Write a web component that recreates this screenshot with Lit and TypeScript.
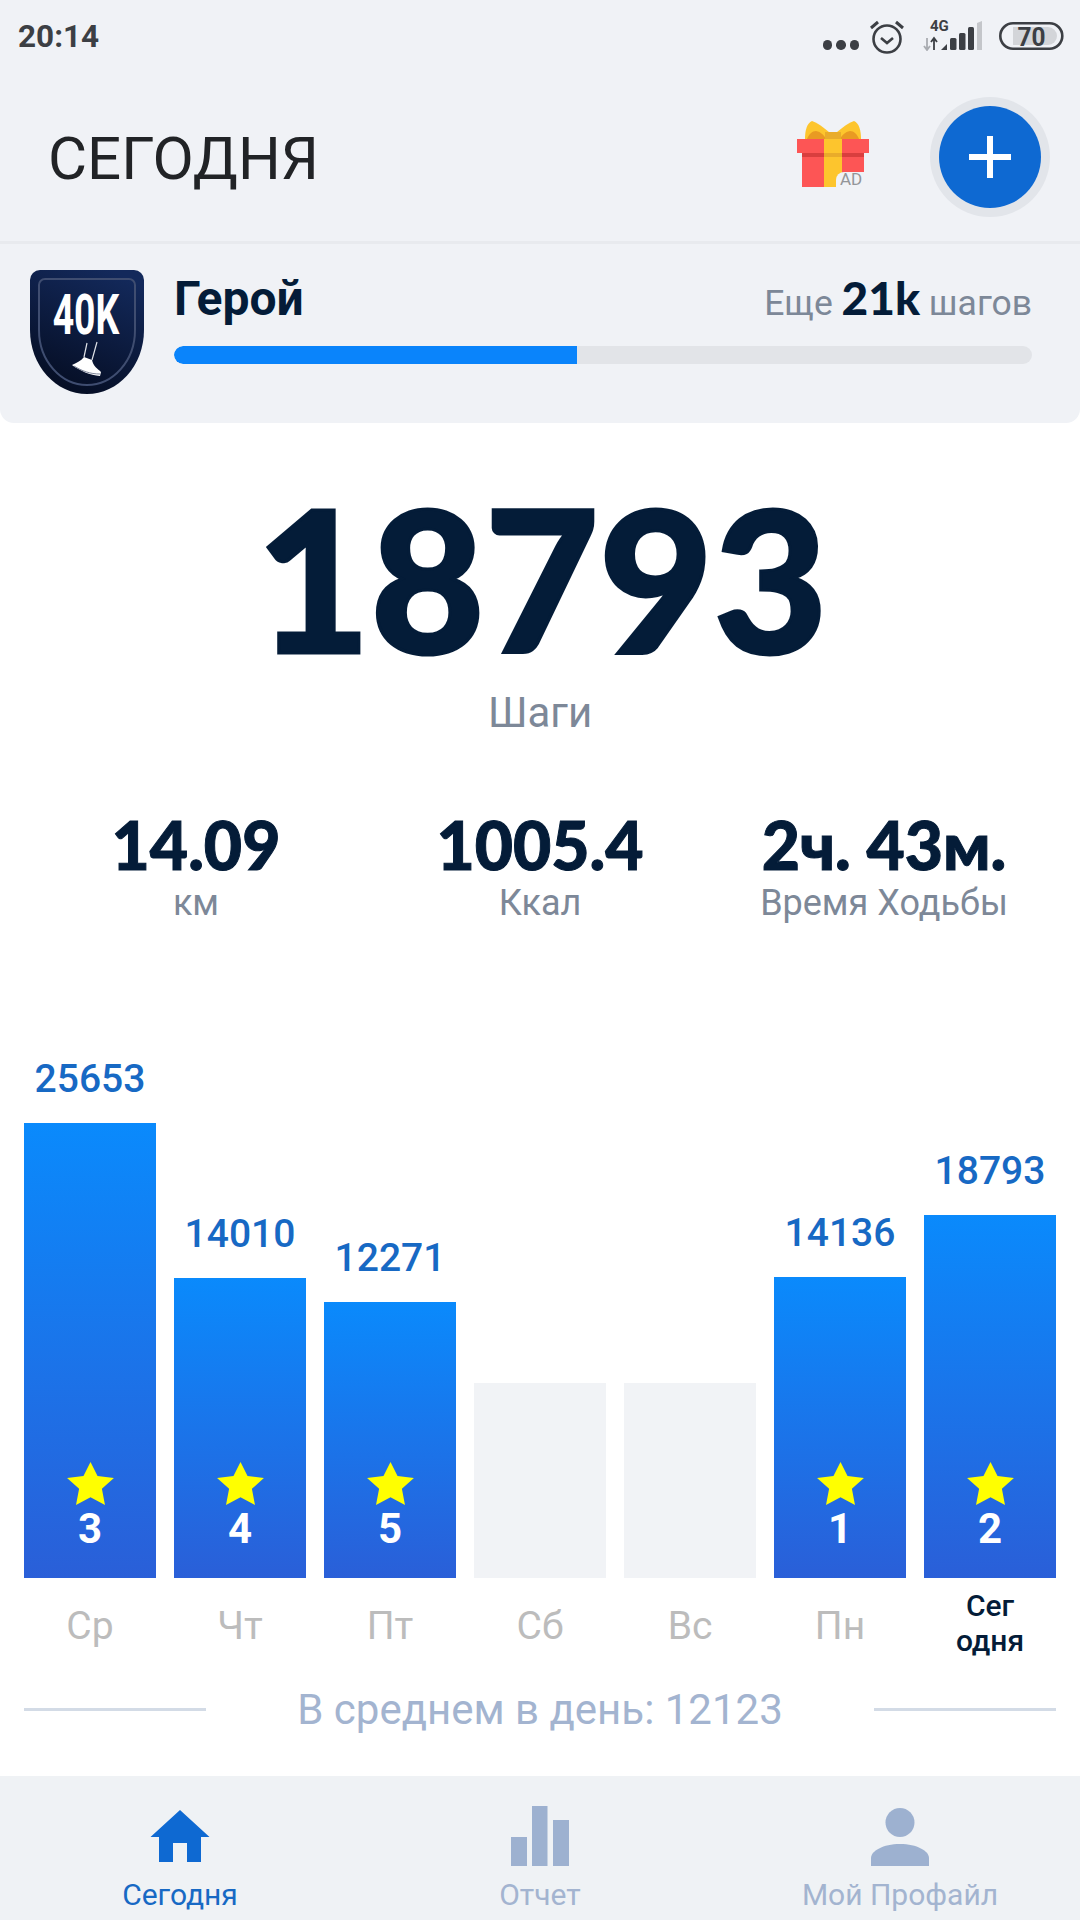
import { LitElement, html, css, svg } from 'lit';
import { customElement } from 'lit/decorators.js';

interface Day {
  label: string;
  steps?: number;
  height: number;
  rank?: number;
  today?: boolean;
}

const DAYS: Day[] = [
  { label: 'Ср', steps: 25653, height: 455, rank: 3 },
  { label: 'Чт', steps: 14010, height: 300, rank: 4 },
  { label: 'Пт', steps: 12271, height: 276, rank: 5 },
  { label: 'Сб', height: 195 },
  { label: 'Вс', height: 195 },
  { label: 'Пн', steps: 14136, height: 301, rank: 1 },
  { label: 'Сег одня', steps: 18793, height: 363, rank: 2, today: true },
];

const STATS = [
  { value: '14.09', label: 'км' },
  { value: '1005.4', label: 'Ккал' },
  { value: '2ч. 43м.', label: 'Время Ходьбы' },
];

const alarmIcon = svg`
  <svg class="alarm" width="38" height="36" viewBox="0 0 38 36">
    <circle cx="19" cy="20" r="13.5" fill="none" stroke="#3c3f44" stroke-width="2.6"/>
    <path d="M13 19l6 5 6-5" fill="none" stroke="#3c3f44" stroke-width="2.6"/>
    <path d="M3 9l7-6M35 9l-7-6" fill="none" stroke="#3c3f44" stroke-width="3"/>
  </svg>`;

const signalIcon = svg`
  <svg class="signal" width="60" height="36" viewBox="0 -4 60 36">
    <text x="7" y="12" font-family="Roboto, sans-serif" font-size="15" font-weight="700" fill="#3c3f44">4G</text>
    <path d="M4 19v12M1 27l3 4 3-4" fill="none" stroke="#a9acb1" stroke-width="1.8"/>
    <path d="M11 31V19M8 23l3-4 3 4" fill="none" stroke="#3c3f44" stroke-width="1.8"/>
    <path d="M18 31l6-6v6z" fill="#3c3f44"/>
    <rect x="27" y="19" width="6.500" height="12" rx="1.500" fill="#3c3f44"/>
    <rect x="36" y="14" width="6.500" height="17" rx="1.500" fill="#3c3f44"/>
    <rect x="45" y="8" width="6" height="23" rx="1.500" fill="#3c3f44"/>
    <path d="M54 4l5-2v29h-5z" fill="#c4c6ca"/>
  </svg>`;

const batteryIcon = svg`
  <svg class="battery" width="65" height="28" viewBox="0 0 65 28">
    <rect x="1.3" y="1.3" width="62" height="25.4" rx="12.7" fill="none" stroke="#3c3f44" stroke-width="2.6"/>
    <path d="M14 5h35a9 9 0 0 1 0 18H14z" fill="#d3d5d9"/>
    <text x="32.500" y="23.500" text-anchor="middle" textLength="28" lengthAdjust="spacingAndGlyphs" font-family="Roboto, sans-serif" font-size="26" font-weight="700" fill="#3c3f44">70</text>
  </svg>`;

// Gift box with the little AD tag in its corner
const giftIcon = svg`
  <svg width="74" height="68" viewBox="0 0 74 68">
    <path d="M9 19C9 10 11 3 16 1c8 3 15 9 21 15v3z" fill="#fdc52d"/>
    <path d="M65 19c0-9-2-16-7-18-8 3-15 9-21 15v3z" fill="#fdc52d"/>
    <path d="M11 19c2-5 5-8 9-8 5 1 8 4 10 8z" fill="#e99a22"/>
    <path d="M63 19c-2-5-5-8-9-8-5 1-8 4-10 8z" fill="#e99a22"/>
    <rect x="29" y="12" width="16" height="7" fill="#e9ac2a"/>
    <rect x="6" y="33" width="62" height="34" fill="#fd5555"/>
    <rect x="6" y="33" width="62" height="4" fill="#d93e3e"/>
    <rect x="1" y="19" width="72" height="14" fill="#fd5555"/>
    <rect x="28" y="19" width="18" height="48" fill="#fdc52d"/>
    <rect x="28" y="33" width="18" height="4" fill="#e9ac2a"/>
    <path d="M48 52h20v15H40v-7a8 8 0 0 1 8-8z" fill="#f0f2f6"/>
    <text x="55" y="65" text-anchor="middle" font-family="Roboto, sans-serif" font-size="17" fill="#939599">AD</text>
  </svg>`;

const shieldIcon = svg`
  <svg width="114" height="124" viewBox="0 0 114 124">
    <defs>
      <linearGradient id="shield" x1="0.7" y1="0" x2="0.3" y2="1">
        <stop offset="0" stop-color="#13295b"/>
        <stop offset="1" stop-color="#050d22"/>
      </linearGradient>
    </defs>
    <path d="M10 0h94a10 10 0 0 1 10 10v50c0 36-26 64-57 64S0 96 0 60V10A10 10 0 0 1 10 0z" fill="url(#shield)"/>
    <path d="M15 9h84a6 6 0 0 1 6 6v45c0 31-22 55-48 55S9 91 9 60V15a6 6 0 0 1 6-6z" fill="none" stroke="#3f4d70" stroke-width="2"/>
    <path d="M57 73l-3 14M67 72l-5 18" fill="none" stroke="#dfe2e8" stroke-width="1.2"/>
    <path d="M54 87l8 3c1 6 6 9 9 12l-1 4C60 105 50 101 42 95c4-2 9-4 12-8z" fill="#fff"/>
    <path d="M44 96c8 5 16 8 26 8" fill="none" stroke="#5d6780" stroke-width="0.8"/>
  </svg>`;

const starIcon = svg`
  <svg class="star" width="49" height="43" viewBox="0 0 46 42" preserveAspectRatio="none">
    <path d="M23 0l6.6 13.6 15.4 2-11.3 10.6L36.6 42 23 34.4 9.4 42l2.9-15.8L1 15.6l15.4-2z" fill="#ffff00"/>
  </svg>`;

const homeIcon = svg`
  <svg width="60" height="56" viewBox="0 0 60 56">
    <path d="M30 0l29.500 27H51v25H37V33H23v19H9V27H0.500z" fill="#0e69d2"/>
  </svg>`;

const reportIcon = svg`
  <svg width="58" height="60" viewBox="0 0 58 60">
    <rect x="0" y="31" width="16" height="29" fill="#9db1d0"/>
    <rect x="21" y="0" width="15.500" height="60" fill="#9db1d0"/>
    <rect x="42" y="14" width="16" height="46" fill="#9db1d0"/>
  </svg>`;

const profileIcon = svg`
  <svg width="58" height="58" viewBox="0 0 58 58">
    <circle cx="29" cy="14.500" r="14.500" fill="#9db1d0"/>
    <path d="M0 58v-8C0 43 12 36 29 36s29 7 29 14v8z" fill="#9db1d0"/>
  </svg>`;

@customElement('app-root')
export class AppRoot extends LitElement {
  static styles = css`
    :host {
      display: block;
      width: 1080px;
      height: 1920px;
      overflow: hidden;
      background: #fff;
      font-family: Roboto, 'Noto Sans', sans-serif;
      color: #041c38;
    }

    .top {
      background: #f0f2f6;
      border-radius: 0 0 14px 14px;
      height: 423px;
    }

    .status {
      height: 72px;
      display: flex;
      align-items: flex-start;
      justify-content: space-between;
      padding: 15px 16px 0 18px;
      box-sizing: border-box;
    }
    .clock {
      margin-top: 4px;
      font-size: 31.5px;
      font-weight: 700;
      line-height: 36px;
      color: #3c3f44;
    }
    .status-icons {
      display: flex;
      align-items: flex-start;
    }
    .dots {
      display: flex;
      gap: 4px;
      margin: 25px 9px 0 0;
    }
    .dots i {
      width: 9.500px;
      height: 9.500px;
      border-radius: 50%;
      background: #3c3f44;
    }
    .alarm {
      margin: 4px 17px 0 0;
    }
    .signal {
      margin-right: 16px;
    }
    .battery {
      margin-top: 7px;
    }

    .header {
      height: 169px;
      display: flex;
      align-items: center;
      padding: 0 39px 0 48px;
      border-bottom: 3px solid #e8eaee;
    }
    .header h1 {
      flex: 1;
      margin: 0;
      padding-top: 3px;
      font-size: 60px;
      font-weight: 400;
      color: #212326;
    }
    .gift {
      margin: 0 69px 5px 0;
      display: flex;
    }
    .add {
      width: 102px;
      height: 102px;
      border-radius: 50%;
      background: #0e69d2;
      box-shadow: 0 0 0 9px #e2e5ea;
      display: grid;
      place-items: center;
    }

    .level {
      display: flex;
      gap: 30px;
      padding: 26px 48px 0 30px;
    }
    .badge {
      position: relative;
      width: 114px;
      height: 124px;
    }
    .badge span {
      position: absolute;
      top: 18px;
      left: 0;
      width: 112px;
      text-align: center;
      font-size: 55px;
      font-weight: 700;
      line-height: 55px;
      color: #fff;
      transform: scaleX(0.68);
    }
    .level-body {
      flex: 1;
    }
    .level-head {
      display: flex;
      justify-content: space-between;
      align-items: baseline;
      height: 76px;
    }
    .level-name {
      font-size: 48px;
      font-weight: 700;
      line-height: 56px;
    }
    .level-left {
      font-size: 35.500px;
      color: #7d8898;
    }
    .level-left b {
      font-family: Lato, sans-serif;
      font-size: 46px;
      font-weight: 900;
      color: #041c38;
    }
    .track {
      height: 18px;
      border-radius: 9px;
      background: #e2e4e8;
      overflow: hidden;
    }
    .fill {
      height: 100%;
      background: #0a84fb;
      border-radius: 9px 0 0 9px;
    }

    .total {
      text-align: center;
      padding: 35.500px 0 0 4px;
    }
    .total-value {
      font-family: Lato, sans-serif;
      font-size: 197px;
      font-weight: 900;
      line-height: 236px;
      -webkit-text-stroke: 3px #041c38;
    }
    .total-label {
      padding-right: 4px;
      font-size: 42px;
      line-height: 35px;
      color: #7d8898;
    }

    .stats {
      display: grid;
      grid-template-columns: repeat(3, 1fr);
      padding: 0 24px;
      margin-top: 77.500px;
      text-align: center;
    }
    .stat-value {
      font-family: Lato, 'Noto Sans', sans-serif;
      font-size: 66px;
      font-weight: 900;
      line-height: 76px;
      -webkit-text-stroke: 1px #041c38;
    }
    .stat-label {
      font-size: 36px;
      line-height: 40px;
      color: #7d8898;
    }

    .columns {
      display: grid;
      grid-template-columns: repeat(7, 132px);
      gap: 18px;
      height: 624px;
      align-items: end;
      margin: 127px 24px 0;
    }
    .column {
      display: flex;
      flex-direction: column;
      align-items: center;
    }
    .steps {
      font-size: 39px;
      font-weight: 500;
      line-height: 46px;
      margin-bottom: 21px;
      color: #1769c4;
    }
    .bar {
      width: 132px;
      box-sizing: border-box;
      display: flex;
      flex-direction: column;
      align-items: center;
      justify-content: flex-end;
      padding-bottom: 24px;
      background: linear-gradient(#0a8afc, #2a5fd8);
    }
    .bar.empty {
      background: #f1f3f6;
    }
    .rank {
      font-size: 42px;
      font-weight: 700;
      line-height: 50px;
      color: #fff;
      margin-top: -1px;
    }
    .day {
      height: 96px;
      width: 100%;
      display: flex;
      align-items: center;
      justify-content: center;
      text-align: center;
      font-size: 39px;
      color: #bcbcbc;
    }
    .day.today {
      align-items: flex-start;
      font-size: 30px;
      font-weight: 500;
      line-height: 35px;
      color: #041c38;
      padding: 10px 30px 0;
      box-sizing: border-box;
    }

    .average {
      display: flex;
      align-items: center;
      gap: 91px;
      padding: 0 24px;
      height: 56px;
      margin: 7px 0 39px;
      font-size: 42px;
      color: #a3b4d0;
      white-space: nowrap;
    }
    .average hr {
      flex: 1;
      margin: 0;
      border: 0;
      height: 3px;
      background: #d3dbe6;
    }

    .tabs {
      display: grid;
      grid-template-columns: repeat(3, 1fr);
      height: 144px;
      background: #eff2f5;
      text-align: center;
      font-size: 30px;
      color: #a3b4d0;
    }
    .tab {
      display: flex;
      flex-direction: column;
      align-items: center;
    }
    .tab-icon {
      height: 90px;
      display: flex;
      align-items: flex-end;
      margin-bottom: 11px;
    }
    .tab.active {
      color: #1769c4;
    }
  `;

  render() {
    return html`
      <div class="top">
        <div class="status">
          <span class="clock">20:14</span>
          <div class="status-icons">
            <div class="dots"><i></i><i></i><i></i></div>
            ${alarmIcon} ${signalIcon} ${batteryIcon}
          </div>
        </div>
        <div class="header">
          <h1>СЕГОДНЯ</h1>
          <div class="gift">${giftIcon}</div>
          <div class="add">
            <svg width="42" height="42" viewBox="0 0 42 42">
              <path d="M21 0v42M0 21h42" stroke="#fff" stroke-width="6"/>
            </svg>
          </div>
        </div>
        <div class="level">
          <div class="badge">${shieldIcon}<span>40K</span></div>
          <div class="level-body">
            <div class="level-head">
              <span class="level-name">Герой</span>
              <span class="level-left">Еще <b>21k</b> шагов</span>
            </div>
            <div class="track"><div class="fill" style="width: 47%"></div></div>
          </div>
        </div>
      </div>

      <div class="total">
        <div class="total-value">18793</div>
        <div class="total-label">Шаги</div>
      </div>

      <div class="stats">
        ${STATS.map(
          (s) => html`
            <div>
              <div class="stat-value">${s.value}</div>
              <div class="stat-label">${s.label}</div>
            </div>
          `
        )}
      </div>

      <div class="columns">
        ${DAYS.map(
          (d) => html`
            <div class="column">
              ${d.steps ? html`<div class="steps">${d.steps}</div>` : ''}
              <div class="bar ${d.steps ? '' : 'empty'}" style="height: ${d.height}px">
                ${d.rank
                  ? html`${starIcon}<div class="rank">${d.rank}</div>`
                  : ''}
              </div>
              <div class="day ${d.today ? 'today' : ''}">${d.label}</div>
            </div>
          `
        )}
      </div>

      <div class="average">
        <hr />
        <span>В среднем в день: 12123</span>
        <hr />
      </div>

      <div class="tabs">
        <div class="tab active">
          <div class="tab-icon">${homeIcon}</div>
          Сегодня
        </div>
        <div class="tab">
          <div class="tab-icon">${reportIcon}</div>
          Отчет
        </div>
        <div class="tab">
          <div class="tab-icon">${profileIcon}</div>
          Мой Профайл
        </div>
      </div>
    `;
  }
}
